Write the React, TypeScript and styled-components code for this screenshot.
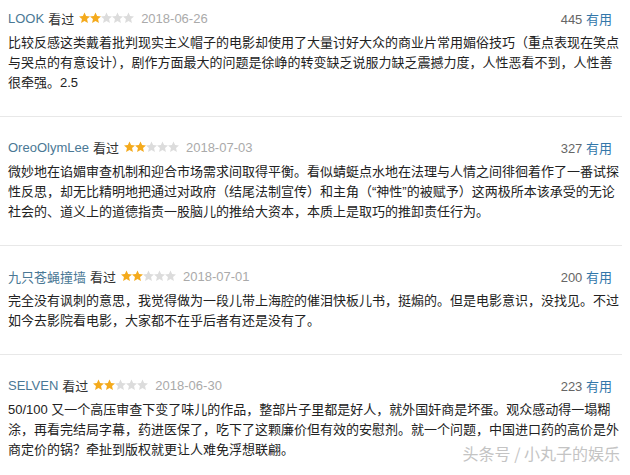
import React from 'react';
import styled, { createGlobalStyle } from 'styled-components';

const GlobalStyle = createGlobalStyle`
	html,
	body {
		margin: 0;
		background: #fff;
	}

	body {
		font-family: 'Liberation Sans', 'Noto Sans CJK SC', sans-serif;
		color: #333;
	}
`;

type Review = {
	user: string;
	stars: number;
	date: string;
	votes: number;
	text: string;
};

const reviews: Review[] = [
	{
		user: 'LOOK',
		stars: 2,
		date: '2018-06-26',
		votes: 445,
		text: '比较反感这类戴着批判现实主义帽子的电影却使用了大量讨好大众的商业片常用媚俗技巧（重点表现在笑点与哭点的有意设计），剧作方面最大的问题是徐峥的转变缺乏说服力缺乏震撼力度，人性恶看不到，人性善很牵强。2.5',
	},
	{
		user: 'OreoOlymLee',
		stars: 2,
		date: '2018-07-03',
		votes: 327,
		text: '微妙地在谄媚审查机制和迎合市场需求间取得平衡。看似蜻蜓点水地在法理与人情之间徘徊着作了一番试探性反思，却无比精明地把通过对政府（结尾法制宣传）和主角（“神性”的被赋予）这两极所本该承受的无论社会的、道义上的道德指责一股脑儿的推给大资本，本质上是取巧的推卸责任行为。',
	},
	{
		user: '九只苍蝇撞墙',
		stars: 2,
		date: '2018-07-01',
		votes: 200,
		text: '完全没有讽刺的意思，我觉得做为一段儿带上海腔的催泪快板儿书，挺煽的。但是电影意识，没找见。不过如今去影院看电影，大家都不在乎后者有还是没有了。',
	},
	{
		user: 'SELVEN',
		stars: 2,
		date: '2018-06-30',
		votes: 223,
		text: '50/100 又一个高压审查下变了味儿的作品，整部片子里都是好人，就外国奸商是坏蛋。观众感动得一塌糊涂，再看完结局字幕，药进医保了，吃下了这颗廉价但有效的安慰剂。就一个问题，中国进口药的高价是外商定价的锅？牵扯到版权就更让人难免浮想联翩。',
	},
];

const Star: React.FunctionComponent<{ on: boolean }> = ({ on }) => (
	<svg width="11" height="12" viewBox="0 0 22 24">
		<polygon
			points="11,1 14.2,8.2 22,9 16.1,14.2 17.8,22 11,18 4.2,22 5.9,14.2 0,9 7.8,8.2"
			fill={on ? '#f4aa1c' : '#dcdcdc'}
		/>
	</svg>
);

const App: React.FunctionComponent = () => {
	const items = reviews.map(
		(r: Review, i: number): JSX.Element => (
			<Item key={r.user} first={i === 0}>
				<Header>
					<Info>
						<UserName>{r.user}</UserName>
						<Seen>看过</Seen>
						<Stars>
							{[0, 1, 2, 3, 4].map((n) => (
								<Star key={n} on={n < r.stars} />
							))}
						</Stars>
						<DateText>{r.date}</DateText>
					</Info>
					<Votes>
						{r.votes} <Useful>有用</Useful>
					</Votes>
				</Header>
				<Body>{r.text}</Body>
			</Item>
		),
	);

	return (
		<Page>
			<GlobalStyle />
			<List>{items}</List>
			<Watermark>头条号 / 小丸子的娱乐</Watermark>
		</Page>
	);
};

const Page = styled.div`
	position: relative;
	width: 630px;
	height: 475px;
	overflow: hidden;
`;

const List = styled.div`
	display: flex;
	flex-direction: column;
	width: 622px;
`;

const Item = styled.div<{ first: boolean }>`
	padding: ${(p) => (p.first ? '8px' : '20px')} 10px 23px 8px;
	border-bottom: 1px solid #e8e8e8;
`;

const Header = styled.div`
	display: flex;
	align-items: center;
	justify-content: space-between;
	height: 20px;
	font-size: 13px;
`;

const Info = styled.div`
	display: flex;
	align-items: center;
	gap: 4px;
`;

const UserName = styled.span`
	color: #4a7895;
`;

const Seen = styled.span`
	color: #333;
`;

const Stars = styled.span`
	display: flex;
	margin: 0 3px 0 1px;

	svg {
		display: block;
	}
`;

const DateText = styled.span`
	color: #aaa;
`;

const Votes = styled.span`
	color: #666;
`;

const Useful = styled.span`
	color: #3377aa;
`;

const Body = styled.p`
	margin: 5px 0 0;
	font-size: 13px;
	line-height: 20px;
	color: #222;
	width: 612px;
`;

const Watermark = styled.div`
	position: absolute;
	right: 10px;
	bottom: 10px;
	font-family: 'Noto Sans CJK SC', sans-serif;
	font-size: 16px;
	color: #c4c4c4;
	text-shadow: 1px 1px 0 #fff, -1px -1px 0 #fff, 0 0 2px #fff;
`;

export default App;
